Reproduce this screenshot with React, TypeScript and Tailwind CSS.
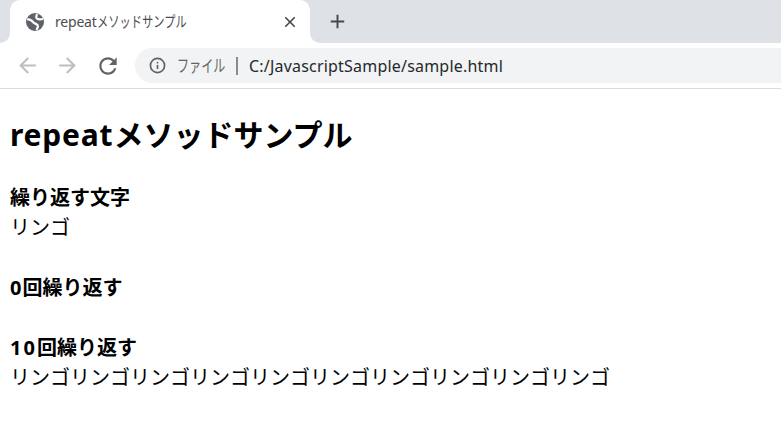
import { Info } from "lucide-react";

const cjk = "font-['Noto_Sans','Noto_Sans_CJK_JP',sans-serif]";

function Globe() {
  return (
    <svg width="18" height="18" viewBox="0 0 18 18" className="shrink-0">
      <circle cx="9" cy="9" r="9" fill="#5f6368" />
      <path d="M1 6.5C4.5 5.5 6 7.5 7.5 9.5C9.5 11.5 12 10.5 12 13.5L10.5 17" fill="none" stroke="#fff" strokeWidth="2.2" />
      <path d="M17 6C14.5 6.5 11.5 7 10.5 5C10 3.5 10.5 2.5 11 1" fill="none" stroke="#fff" strokeWidth="2.2" />
    </svg>
  );
}

// material style toolbar icons, the lucide ones are too thin here
function Glyph({ d, size, className }: { d: string; size: number; className: string }) {
  return (
    <svg width={size} height={size} viewBox="0 0 24 24" fill="currentColor" className={className}>
      <path d={d} />
    </svg>
  );
}

const backPath = "M20 11H7.83l5.59-5.59L12 4l-8 8 8 8 1.41-1.41L7.83 13H20v-2z";
const forwardPath = "M4 11h12.17l-5.59-5.59L12 4l8 8-8 8-1.41-1.41L16.17 13H4v-2z";
const reloadPath =
  "M17.65 6.35C16.2 4.9 14.21 4 12 4c-4.42 0-7.99 3.58-7.99 8s3.57 8 7.99 8c3.73 0 6.84-2.55 7.73-6h-2.08c-.82 2.33-3.04 4-5.65 4-3.31 0-6-2.69-6-6s2.69-6 6-6c1.66 0 3.14.69 4.22 1.78L13 11h7V4l-2.35 2.35z";
const closePath = "M19 6.41L17.59 5 12 10.59 6.41 5 5 6.41 10.59 12 5 17.59 6.41 19 12 13.41 17.59 19 19 17.59 13.41 12z";
const plusPath = "M19 13h-6v6h-2v-6H5v-2h6V5h2v6h6v2z";

export default function App() {
  return (
    <div className={`w-[781px] h-[434px] bg-white overflow-hidden ${cjk}`}>
      <div className="h-[43px] flex bg-[linear-gradient(#dee1e6_50%,#fff_50%)]">
        <div className="w-[10px] bg-[#dee1e6] rounded-br-[10px]" />
        <div className="w-[300px] bg-white rounded-t-[10px] flex items-center pl-[16px] pr-[12px]">
          <Globe />
          <span className="ml-[11px] text-[14px] tracking-[-0.2px] text-[#4a4d51] whitespace-nowrap">repeat</span>
          <span className="w-[90px] whitespace-nowrap text-[15px] text-[#4a4d51] inline-block origin-left scale-x-[0.75]">メソッドサンプル</span>
          <Glyph d={closePath} size={18} className="ml-auto mr-[-1px] text-[#3c4043]" />
        </div>
        <div className="flex-1 bg-[#dee1e6] rounded-bl-[10px] flex items-center pl-[16px]">
          <Glyph d={plusPath} size={23} className="text-[#45484c]" />
        </div>
      </div>
      <div className="h-[46px] border-b border-[#dadce0] flex items-center">
        <Glyph d={backPath} size={25} className="ml-[15px] text-[#bdbfc2]" />
        <Glyph d={forwardPath} size={25} className="ml-[15px] text-[#bdbfc2]" />
        <Glyph d={reloadPath} size={26} className="ml-[15px] text-[#5f6368]" />
        <div className="ml-[14px] flex-1 h-[35px] bg-[#f1f3f4] rounded-l-full flex items-center pl-[14px] text-[16px]">
          <Info size={17} strokeWidth={2.4} className="text-[#5f6368]" />
          <span className="ml-[11px] w-[48px] text-[17px] whitespace-nowrap inline-block origin-left scale-x-[0.71] text-[#5f6368]">ファイル</span>
          <span className="ml-[11px] w-[2px] h-[18px] bg-[#8a8d90]" />
          <span className="ml-[11px] tracking-[0.2px] text-[#26282b]">C:/JavascriptSample/sample.html</span>
        </div>
      </div>
      <div className="pl-[10px] pt-[25px] text-black text-[20px] leading-[30px]">
        <h1 className="text-[30px] leading-[42px] font-bold mb-[27px]">
          <span className="tracking-[0.8px]">repeat</span>メソッドサンプル
        </h1>
        <p className="font-bold">繰り返す文字</p>
        <p>リンゴ</p>
        <p className="font-bold mt-[30px]">
          <span className="tracking-[1px]">0</span>回繰り返す
        </p>
        <p className="font-bold mt-[30px]">
          <span className="tracking-[2px]">10</span>回繰り返す
        </p>
        <p>リンゴリンゴリンゴリンゴリンゴリンゴリンゴリンゴリンゴリンゴ</p>
      </div>
    </div>
  );
}
